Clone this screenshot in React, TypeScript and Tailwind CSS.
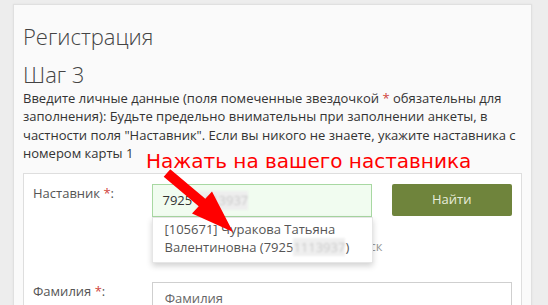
import React from "react";

const Star = () => <span className="text-[#d0443c]">*</span>;

export default function App() {
  return (
    <div
      className="relative w-[548px] h-[305px] overflow-hidden bg-[#ededed] pl-[13px] pt-[4px]"
      style={{ fontFamily: '"Open Sans", "DejaVu Sans", sans-serif' }}
    >
      <div className="w-[519px] h-[400px] border border-[#e0e0e0] bg-[#fafafa] px-[9px] pt-[18px] shadow-[0_0_2px_rgba(0,0,0,0.06)]">
        <div className="text-[22px] leading-[26px] font-light text-[#444] h-[26px]">Регистрация</div>
        <div className="mt-[12px] text-[22px] leading-[26px] font-light text-[#444] h-[26px]">Шаг 3</div>
        <div className="mt-[1.5px] text-[13px] leading-[18.57px] text-[#333] whitespace-nowrap">
          <div>
            Введите личные данные (поля помеченные звездочкой <Star /> обязательны для
          </div>
          <div>заполнения): Будьте предельно внимательны при заполнении анкеты, в</div>
          <div>частности поля "Наставник". Если вы никого не знаете, укажите наставника с</div>
          <div>номером карты 1</div>
        </div>

        <div className="mt-[10px] border border-[#dedede] bg-white pt-[10px] px-[9px] h-[200px] text-[13px] leading-[18.57px]">
          <div className="flex">
            <div className="w-[119px] text-[#555]">
              Наставник <Star />:
            </div>
            <div className="relative w-[220px]">
              <div className="h-[33px] border border-[#a8d8a2] bg-[#f1fcf0] pl-[10px] flex items-center text-[#333]">
                7925
                <span className="ml-[4px] bg-[#eeeeee] text-[#c8c8c8] blur-[0.8px]">1113937</span>
              </div>
              <div className="mt-[2px] text-[#999]">
                <div className="h-[18.57px]" />
                <div className="w-[231px] whitespace-nowrap overflow-hidden text-right">
                  или Поиск
                </div>
              </div>
              <div className="absolute left-0 top-[33px] w-[221px] h-[46px] bg-white border border-[#e6e6e6] shadow-[0_3px_6px_rgba(0,0,0,0.18)] pl-[12px] pt-[2px] text-[#555] whitespace-nowrap">
                <div>[105671] Чуракова Татьяна</div>
                <div>
                  Валентиновна (7925
                  <span className="bg-[#efefef] text-[#c8c8c8] blur-[0.8px]">1113937</span>)
                </div>
              </div>
            </div>
            <button className="ml-[20px] w-[121px] h-[32px] rounded-[2px] bg-[#6f843c] text-[#e8eddc] text-[13px]">
              Найти
            </button>
          </div>

          <div className="flex mt-[26px]">
            <div className="w-[119px] text-[#555]">
              Фамилия <Star />:
            </div>
            <div className="w-[361px] h-[33px] border border-[#cfcfcf] pl-[12px] flex items-center text-[#666]">
              Фамилия
            </div>
          </div>
        </div>
      </div>

      <div
        className="absolute left-[146px] top-[148.5px] text-[20px] leading-[24px] text-[#ff0000] whitespace-nowrap"
        style={{ fontFamily: '"DejaVu Sans", sans-serif' }}
      >
        Нажать на вашего наставника
      </div>
      <svg className="absolute left-0 top-0" width="548" height="305" viewBox="0 0 548 305">
        <polygon
          fill="#ff0000"
          points="170.3,169.3 205.3,198.8 212,191.5 233,232 192,213.5 198.7,206.2 163.7,176.7"
        />
      </svg>
    </div>
  );
}
